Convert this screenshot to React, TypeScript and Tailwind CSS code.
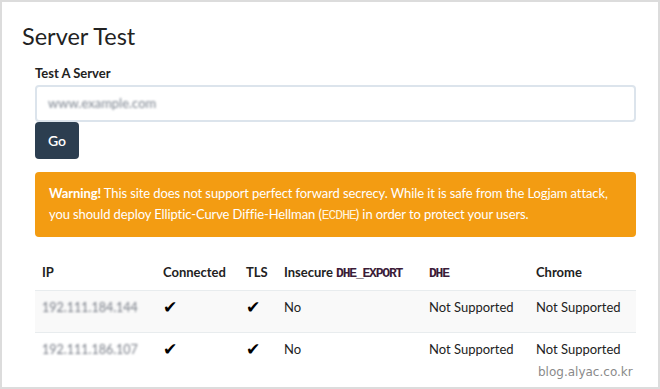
import React from 'react';

const rows = [
  { ip: '192.111.184.144', connected: true, tls: true, insecure: 'No', dhe: 'Not Supported', chrome: 'Not Supported' },
  { ip: '192.111.186.107', connected: true, tls: true, insecure: 'No', dhe: 'Not Supported', chrome: 'Not Supported' },
];

export default function App() {
  return (
    <div className="relative w-[660px] h-[389px] bg-white border-2 border-[#dcdcdc] text-[#2c3e50] font-['Lato',sans-serif] overflow-hidden">
      <h1 className="ml-[20px] mt-[19px] text-[23.5px] leading-[30px] text-[#222]">Server Test</h1>

      <div className="ml-[33px] w-[601px]">
        <label className="block mt-[14px] text-[13px] leading-[16px] font-bold text-[#222]">Test A Server</label>
        <div className="mt-[4px] h-[37px] border-2 border-[#dce4ec] rounded-[4px] flex items-center px-[11px]">
          <span className="text-[13px] text-[#7d8590] blur-[1.3px]">www.example.com</span>
        </div>
        <button className="h-[37px] w-[44px] bg-[#2c3e50] text-white text-[14px] font-semibold rounded-[4px]">Go</button>

        <div className="mt-[13px] bg-[#f39c12] rounded-[4px] px-[14px] py-[11px] text-white text-[13px] tracking-[-0.1px] leading-[21px]">
          <strong>Warning!</strong> This site does not support perfect forward secrecy. While it is safe from the Logjam attack,
          you should deploy Elliptic-Curve Diffie-Hellman (<code className="font-['Liberation_Mono',monospace] text-[13px] tracking-[-1px] text-[#fff3dc]">ECDHE</code>) in order to protect your users.
        </div>

        <table className="mt-[19px] w-full text-[13px] text-[#222] border-collapse">
          <thead>
            <tr className="h-[34px]">
              <th className="w-[121px] text-left font-bold px-[7px]">IP</th>
              <th className="w-[83px] text-left font-bold px-[7px]">Connected</th>
              <th className="w-[38px] text-left font-bold px-[7px]">TLS</th>
              <th className="w-[145px] text-left font-bold px-[7px]">
                Insecure <code className="font-['Liberation_Mono',monospace] text-[13px] tracking-[-1.2px] text-[#3b1c38]">DHE_EXPORT</code>
              </th>
              <th className="w-[107px] text-left font-bold px-[7px]">
                <code className="font-['Liberation_Mono',monospace] text-[13px] tracking-[-1.2px] text-[#3b1c38]">DHE</code>
              </th>
              <th className="text-left font-bold px-[7px]">Chrome</th>
            </tr>
          </thead>
          <tbody>
            {rows.map((r, i) => (
              <tr key={i} className={`border-t border-[#e8ecee] ${i % 2 === 0 ? 'bg-[#f9f9f9]' : 'bg-white'}`}>
                <td className="px-[7px] pt-[6px] pb-[14px] leading-[20px] align-top">
                  <span className="text-[12.5px] text-[#777c86] blur-[1.2px]">{r.ip}</span>
                </td>
                <td className="px-[7px] pt-[6px] pb-[14px] leading-[20px] align-top text-[17px] text-black">{r.connected ? '✔' : ''}</td>
                <td className="px-[7px] pt-[6px] pb-[14px] leading-[20px] align-top text-[17px] text-black">{r.tls ? '✔' : ''}</td>
                <td className="px-[7px] pt-[6px] pb-[14px] leading-[20px] align-top">{r.insecure}</td>
                <td className="px-[7px] pt-[6px] pb-[14px] leading-[20px] align-top">{r.dhe}</td>
                <td className="px-[7px] pt-[6px] pb-[14px] leading-[20px] align-top">{r.chrome}</td>
              </tr>
            ))}
          </tbody>
        </table>
      </div>

      <div className="absolute left-[536px] top-[361px] text-[12px] text-[#8a8a8a] font-['DejaVu_Sans',sans-serif]">blog.alyac.co.kr</div>
    </div>
  );
}
